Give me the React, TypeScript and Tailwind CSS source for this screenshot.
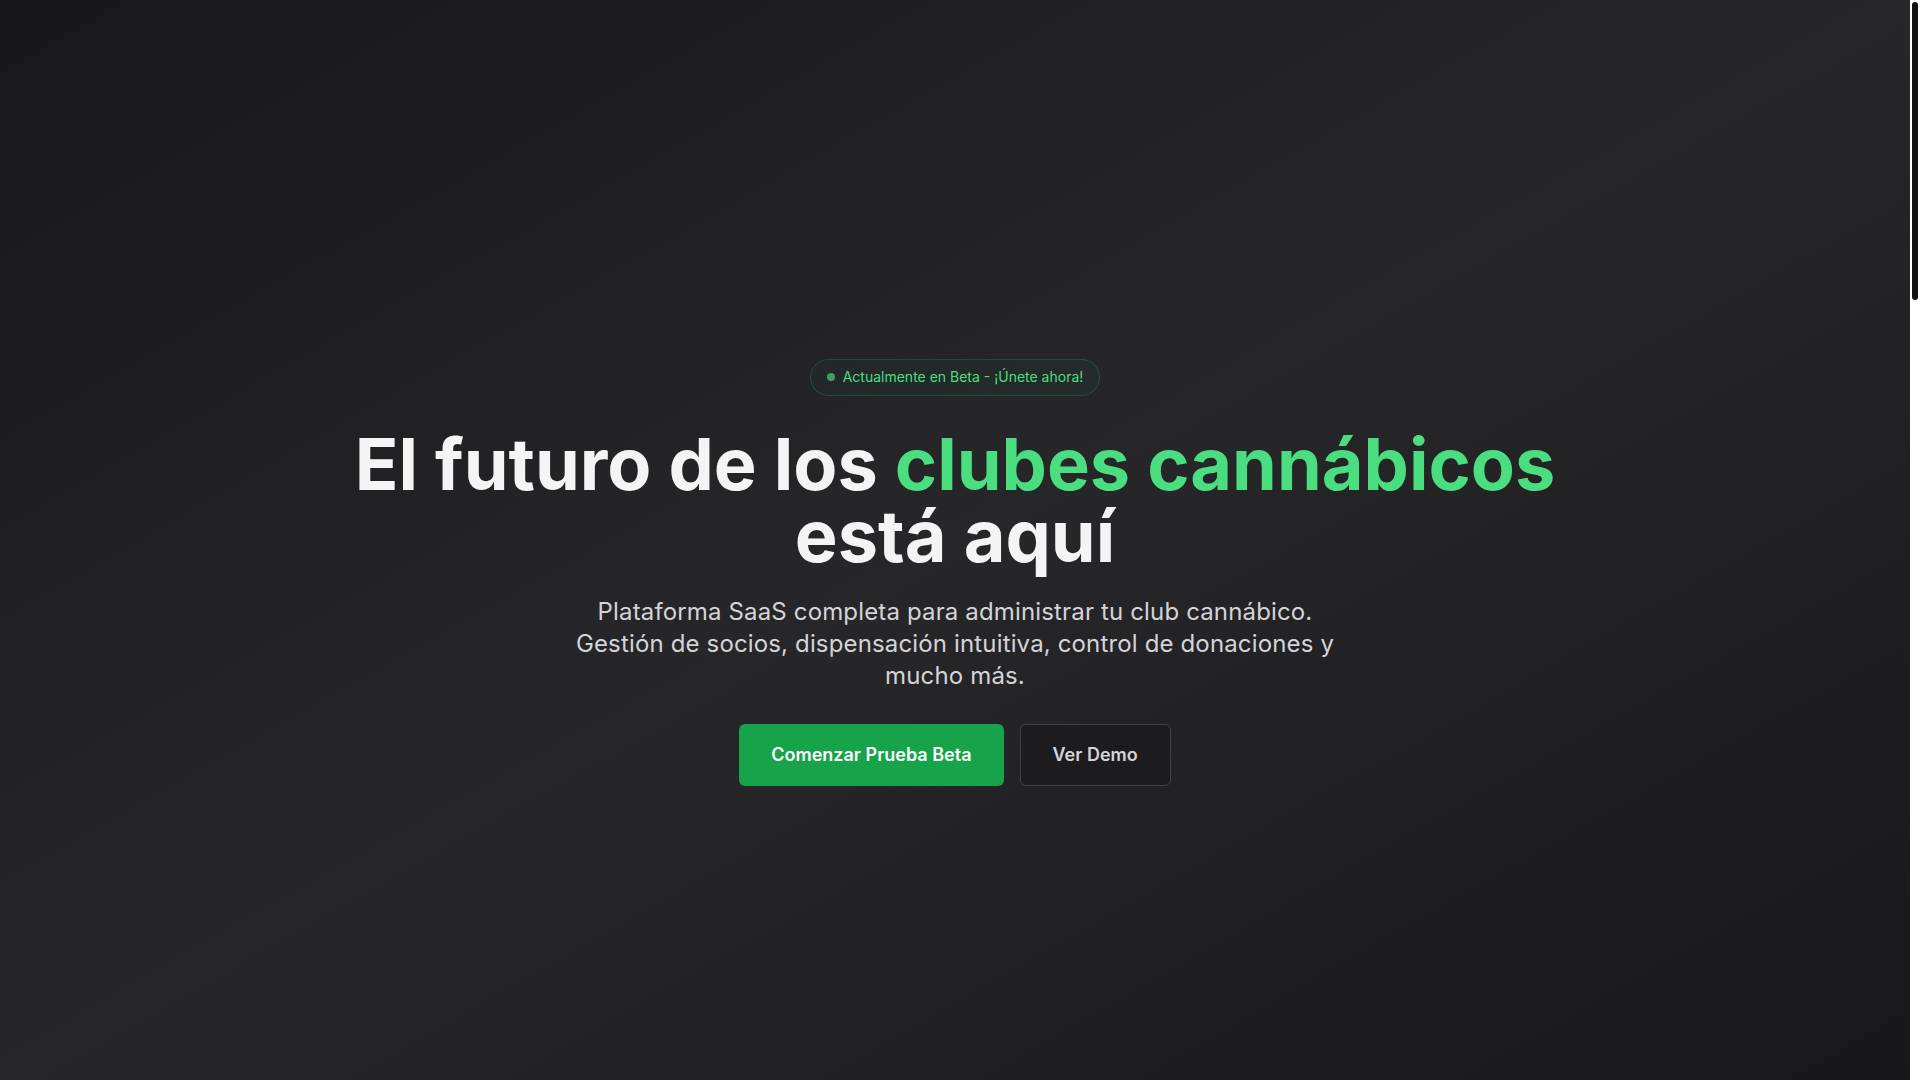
import React from "react";

export default function App() {
  return (
    <div
      className="h-screen flex bg-[#18181b] overflow-hidden"
      style={{ fontFamily: "Inter, 'Noto Sans', sans-serif" }}
    >
      <main className="flex-1 min-w-0">
        <section className="h-screen pt-16 flex items-center justify-center bg-gradient-to-br from-[#18181b] via-[#27272a] to-[#18181b]">
          <div className="flex flex-col items-center text-center px-4">
            <div className="mb-8 inline-flex items-center gap-2 h-[37px] px-4 rounded-full border border-[#22c55e]/25 bg-[#22c55e]/[0.03]">
              <span className="w-2 h-2 rounded-full bg-[#3f9d61]" />
              <span className="text-sm text-[#4ade80]">Actualmente en Beta - ¡Únete ahora!</span>
            </div>
            <h1 className="mb-6 text-7xl font-bold leading-none text-[#f4f4f5]">
              El futuro de los <span className="text-[#4ade80]">clubes cannábicos</span>
              <br />
              está aquí
            </h1>
            <p className="mb-8 max-w-3xl text-2xl tracking-[0.15px] text-[#d4d4d8]">
              Plataforma SaaS completa para administrar tu club cannábico. Gestión de socios, dispensación intuitiva, control de donaciones y mucho más.
            </p>
            <div className="flex items-center gap-4">
              <button className="h-[62px] px-8 rounded-md bg-[#16a34a] text-lg font-semibold text-white">
                Comenzar Prueba Beta
              </button>
              <button className="h-[62px] px-8 rounded-md border border-[#3f3f46] bg-[#1c1c1f] text-lg font-semibold text-[#d4d4d8]">
                Ver Demo
              </button>
            </div>
          </div>
        </section>
      </main>
      <aside className="w-[10px] shrink-0 bg-white flex flex-col items-center pt-[2px]">
        <div className="w-[6px] h-[298px] rounded-full bg-[#111111]" />
      </aside>
    </div>
  );
}
